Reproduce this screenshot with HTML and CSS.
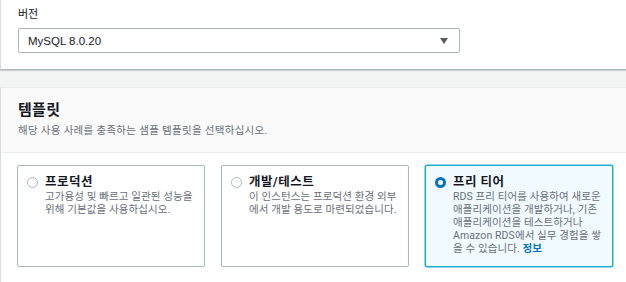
FILE: index.html
```html
<!DOCTYPE html>
<html lang="ko">
<head>
<meta charset="utf-8">
<title>템플릿</title>
<link rel="stylesheet" href="styles.css">
</head>
<body>
<div class="page">
  <section class="panel panel-version">
    <div class="field-label">버전</div>
    <div class="select">
      <span class="select-value">MySQL 8.0.20</span>
      <svg class="caret" width="8" height="6" viewBox="0 0 8 6"><path d="M0 0H8L4 6Z" fill="#545b64"/></svg>
    </div>
  </section>

  <section class="panel panel-templates">
    <header class="panel-header">
      <h2 class="panel-title">템플릿</h2>
      <p class="panel-desc">해당 사용 사례를 충족하는 샘플 템플릿을 선택하십시오.</p>
    </header>
    <div class="panel-body">
      <div class="tiles">
        <div class="tile">
          <span class="radio"></span>
          <div class="tile-text">
            <div class="tile-title">프로덕션</div>
            <div class="tile-desc">고가용성 및 빠르고 일관된 성능을<br>위해 기본값을 사용하십시오.</div>
          </div>
        </div>
        <div class="tile">
          <span class="radio"></span>
          <div class="tile-text">
            <div class="tile-title">개발/테스트</div>
            <div class="tile-desc">이 인스턴스는 프로덕션 환경 외부<br>에서 개발 용도로 마련되었습니다.</div>
          </div>
        </div>
        <div class="tile tile-selected">
          <span class="radio radio-checked"></span>
          <div class="tile-text">
            <div class="tile-title">프리 티어</div>
            <div class="tile-desc">RDS 프리 티어를 사용하여 새로운<br>애플리케이션을 개발하거나, 기존<br>애플리케이션을 테스트하거나<br>Amazon RDS에서 실무 경험을 쌓<br>을 수 있습니다. <a class="info-link" href="#">정보</a></div>
          </div>
        </div>
      </div>
    </div>
  </section>
</div>
</body>
</html>
```

FILE: styles.css
```css
html, body {
  margin: 0;
  padding: 0;
}

body {
  background: #f2f3f3;
  font-family: Roboto, "Noto Sans CJK KR", sans-serif;
  color: #16191f;
  overflow: hidden;
}

.page {
  width: 640px;
}

.panel {
  background: #ffffff;
  border-left: 1px solid #d5dbdb;
}

.panel-version {
  padding: 6px 0 16px 17px;
  border-bottom: 1px solid #aab7b8;
  box-shadow: 0 1px 1px rgba(0, 28, 36, 0.15);
}

.field-label {
  font-size: 11px;
  line-height: 18px;
  color: #16191f;
}

.select {
  margin-top: 4px;
  width: 442px;
  height: 25px;
  box-sizing: border-box;
  border: 1px solid #aab7b8;
  border-radius: 2px;
  display: flex;
  align-items: center;
  justify-content: space-between;
  padding: 0 11px 0 9px;
}

.select-value {
  font-family: "Liberation Sans", "Noto Sans CJK KR", sans-serif;
  font-size: 11.5px;
  color: #16191f;
}

.caret {
  display: block;
}

.panel-templates {
  margin-top: 17px;
  border-top: 1px solid #eaeded;
}

.panel-header {
  background: #fafafa;
  border-bottom: 1px solid #eaeded;
  padding: 11px 0 13px 17px;
}

.panel-title {
  margin: 0;
  font-size: 15px;
  line-height: 22px;
  font-weight: 700;
  color: #16191f;
  letter-spacing: 0.3px;
}

.panel-desc {
  margin: 2px 0 0;
  font-size: 10.5px;
  line-height: 16px;
  color: #687078;
  letter-spacing: 0.3px;
}

.panel-body {
  padding: 12px 16px 16px;
}

.tiles {
  display: grid;
  grid-template-columns: repeat(3, 188px);
  column-gap: 16px;
}

.tile {
  display: flex;
  gap: 7px;
  border: 1px solid #aab7b8;
  border-radius: 2px;
  padding: 8px 5px 11px 9px;
  background: #ffffff;
}

.tile-selected {
  border-color: #1eaed3;
  background: #f1faff;
  box-shadow: 0 0 0 0.5px #1eaed3;
}

.radio {
  flex: none;
  width: 11px;
  height: 11px;
  box-sizing: border-box;
  border: 1px solid #aab7b8;
  border-radius: 50%;
  margin-top: 2.5px;
  background: #ffffff;
}

.radio-checked {
  border: 3.5px solid #0073bb;
}

.tile-text {
  min-width: 0;
}

.tile-title {
  font-size: 12.5px;
  line-height: 16px;
  font-weight: 700;
  color: #16191f;
  letter-spacing: 0.5px;
}

.tile-desc {
  font-size: 10.5px;
  line-height: 13px;
  color: #687078;
  letter-spacing: 0.1px;
  white-space: nowrap;
}

.info-link {
  color: #0073bb;
  font-weight: 700;
  text-decoration: none;
}
```
